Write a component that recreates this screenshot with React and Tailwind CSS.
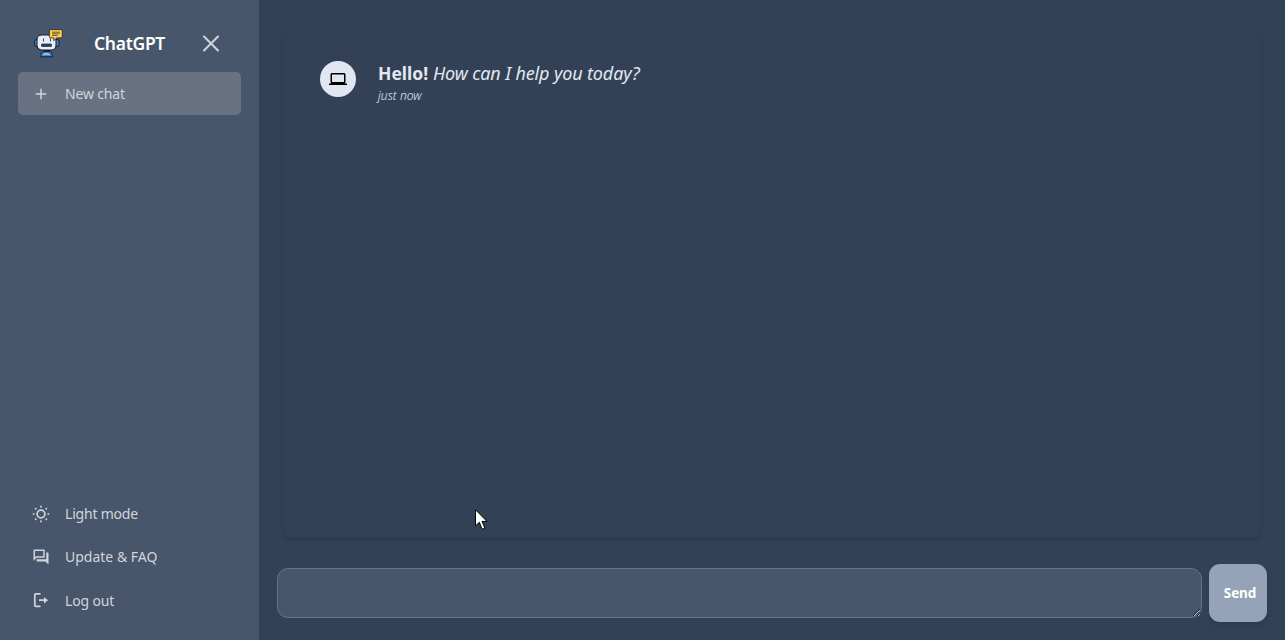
import { MdOutlineQuestionAnswer, MdLaptop, MdAdd } from "react-icons/md";

function RobotLogo() {
  return (
    <svg width="30" height="30" viewBox="0 0 30 30" className="shrink-0">
      <rect x="1.500" y="10.500" width="4" height="7" rx="2" fill="#4380cc" stroke="#17202e" strokeWidth="1" />
      <rect x="21.500" y="10.500" width="4.500" height="7" rx="2" fill="#4380cc" stroke="#17202e" strokeWidth="1" />
      <path d="M11 20h6v3h-6z" fill="#17202e" />
      <path d="M7.700 27.800v-1.600q.2-3.600 3-3.600h5.600q2.800 0 3 3.600v1.600z" fill="#4380cc" stroke="#17202e" strokeWidth="1" />
      <path d="M10.500 25.800q3-2 6 0" fill="none" stroke="#c5daf4" strokeWidth="1.200" />
      <rect x="4" y="6" width="19" height="15" rx="4.500" fill="#e9edf5" stroke="#17202e" strokeWidth="1.100" />
      <path d="M10.500 9.500v3M17.500 9.500v3" stroke="#3a4350" strokeWidth="1" />
      <rect x="8.500" y="15" width="10" height="2.500" rx=".6" fill="#1d5065" stroke="#17202e" strokeWidth=".7" />
      <path d="M17.500.600h10.500q1.300 0 1.300 1.300v5.700q0 1.300-1.300 1.300h-4.200l-3 2.800V8.900h-3.300q-1.200 0-1.200-1.300V1.900q0-1.300 1.200-1.300z" fill="#fbcf55" stroke="#272a2d" strokeWidth=".9" />
      <path d="M19 3.200h8M19 4.800h7.500M19 6.400h5.500" stroke="#735c29" strokeWidth="1" />
    </svg>
  );
}

function SunIcon() {
  return (
    <svg width="18" height="18" viewBox="0 0 18 18" fill="none" stroke="currentColor" strokeWidth="1.700">
      <circle cx="9" cy="9" r="3.900" />
      <path d="M9 .7v1.900M9 15.400v1.900M.7 9h1.900M15.400 9h1.900M3.200 3.200l1.100 1.100M13.700 13.700l1.100 1.100M3.200 14.800l1.100-1.100M13.700 4.300l1.100-1.100" />
    </svg>
  );
}

function LogoutIcon() {
  return (
    <svg width="18" height="18" viewBox="0 0 18 18" fill="none" stroke="currentColor" strokeWidth="1.700" className="-translate-y-px">
      <path d="M8.500 2.800H4Q2.800 2.800 2.800 4v10.200q0 1.200 1.200 1.200h4.500M7 9.200h6" />
      <path d="M12 6L16 9.200l-4 3.200z" fill="currentColor" stroke="none" />
    </svg>
  );
}

function NavItem({ icon, label, className = "" }) {
  return (
    <button
      className={
        "flex h-[43px] w-full shrink-0 items-center gap-[15px] rounded-[5px] pl-[14px] text-left text-[14px] text-[#d1d5db] " +
        className
      }
    >
      <span className="flex w-[18px] justify-center">{icon}</span>
      <span>{label}</span>
    </button>
  );
}

export default function App() {
  return (
    <div className="relative flex h-screen w-screen overflow-hidden bg-[#334157] font-['Noto_Sans',sans-serif]">
      <aside className="flex w-[259px] shrink-0 flex-col bg-[#47566b] px-[18px] pb-[18px]">
        <header className="flex h-[72px] items-center pt-[15px] pl-[15px]">
          <RobotLogo />
          <h1 className="ml-[31px] w-[71px] text-[17.500px] font-semibold tracking-[-0.3px] whitespace-nowrap text-white">ChatGPT</h1>
          <button className="ml-[37px]" aria-label="Close">
            <svg width="18" height="18" viewBox="0 0 18 18" className="-translate-y-[0.500px] text-[#d1d5db]" fill="none" stroke="currentColor" strokeWidth="2" strokeLinecap="round">
              <path d="M2 2l14 14M16 2L2 16" />
            </svg>
          </button>
        </header>
        <NavItem icon={<MdAdd size={18} />} label="New chat" className="bg-[#687282] tracking-[-0.15px]" />
        <nav className="mt-auto flex flex-col">
          <NavItem icon={<SunIcon />} label="Light mode" className="tracking-[-0.2px]" />
          <NavItem icon={<MdOutlineQuestionAnswer size={18} />} label="Update & FAQ" className="mb-px" />
          <NavItem icon={<LogoutIcon />} label="Log out" className="tracking-[-0.15px]" />
        </nav>
      </aside>

      <main className="flex min-w-0 flex-1 flex-col pt-[29px] pr-[18px] pb-[18px] pl-[18px]">
        <section className="mr-[7px] ml-[7px] h-[508px] rounded-md pt-[32px] pl-[36px] shadow-md">
          <div className="flex gap-[22px]">
            <div className="flex size-9 items-center justify-center rounded-full bg-[#e2e6f0] text-black">
              <MdLaptop size={18} />
            </div>
            <div className="-mt-px text-[#e2e8f0]">
              <p className="text-[18px] leading-[26px] whitespace-nowrap">
                <strong className="inline-block w-[55px] text-[17.500px] font-bold">Hello!</strong>
                <em className="tracking-[-0.13px]">How can I help you today?</em>
              </p>
              <p className="mt-px text-[12px] leading-[17px] font-light tracking-[0.05px] italic">just now</p>
            </div>
          </div>
        </section>
        <form className="mt-[27px] flex items-center gap-[7px]">
          <textarea
            aria-label="Message"
            className="h-[50px] min-w-0 flex-1 resize rounded-[11px] border border-[#64748b] bg-[#47566b] p-3 text-sm text-[#e2e8f0] outline-none"
          />
          <button type="button" className="h-[58px] w-[58px] rounded-[11px] bg-[#94a3b8] pl-[4px] text-[13.500px] font-bold tracking-[-0.1px] text-white shadow-md">
            Send
          </button>
        </form>
      </main>

      <svg className="absolute top-[509px] left-[475px]" width="13" height="22" viewBox="0 0 13 22">
        <path d="M.5.700v16.200l3.800-3.600 2.800 7 2.800-1.200-2.900-6.700h5z" fill="#fff" stroke="#000" strokeWidth="1" />
      </svg>
    </div>
  );
}
